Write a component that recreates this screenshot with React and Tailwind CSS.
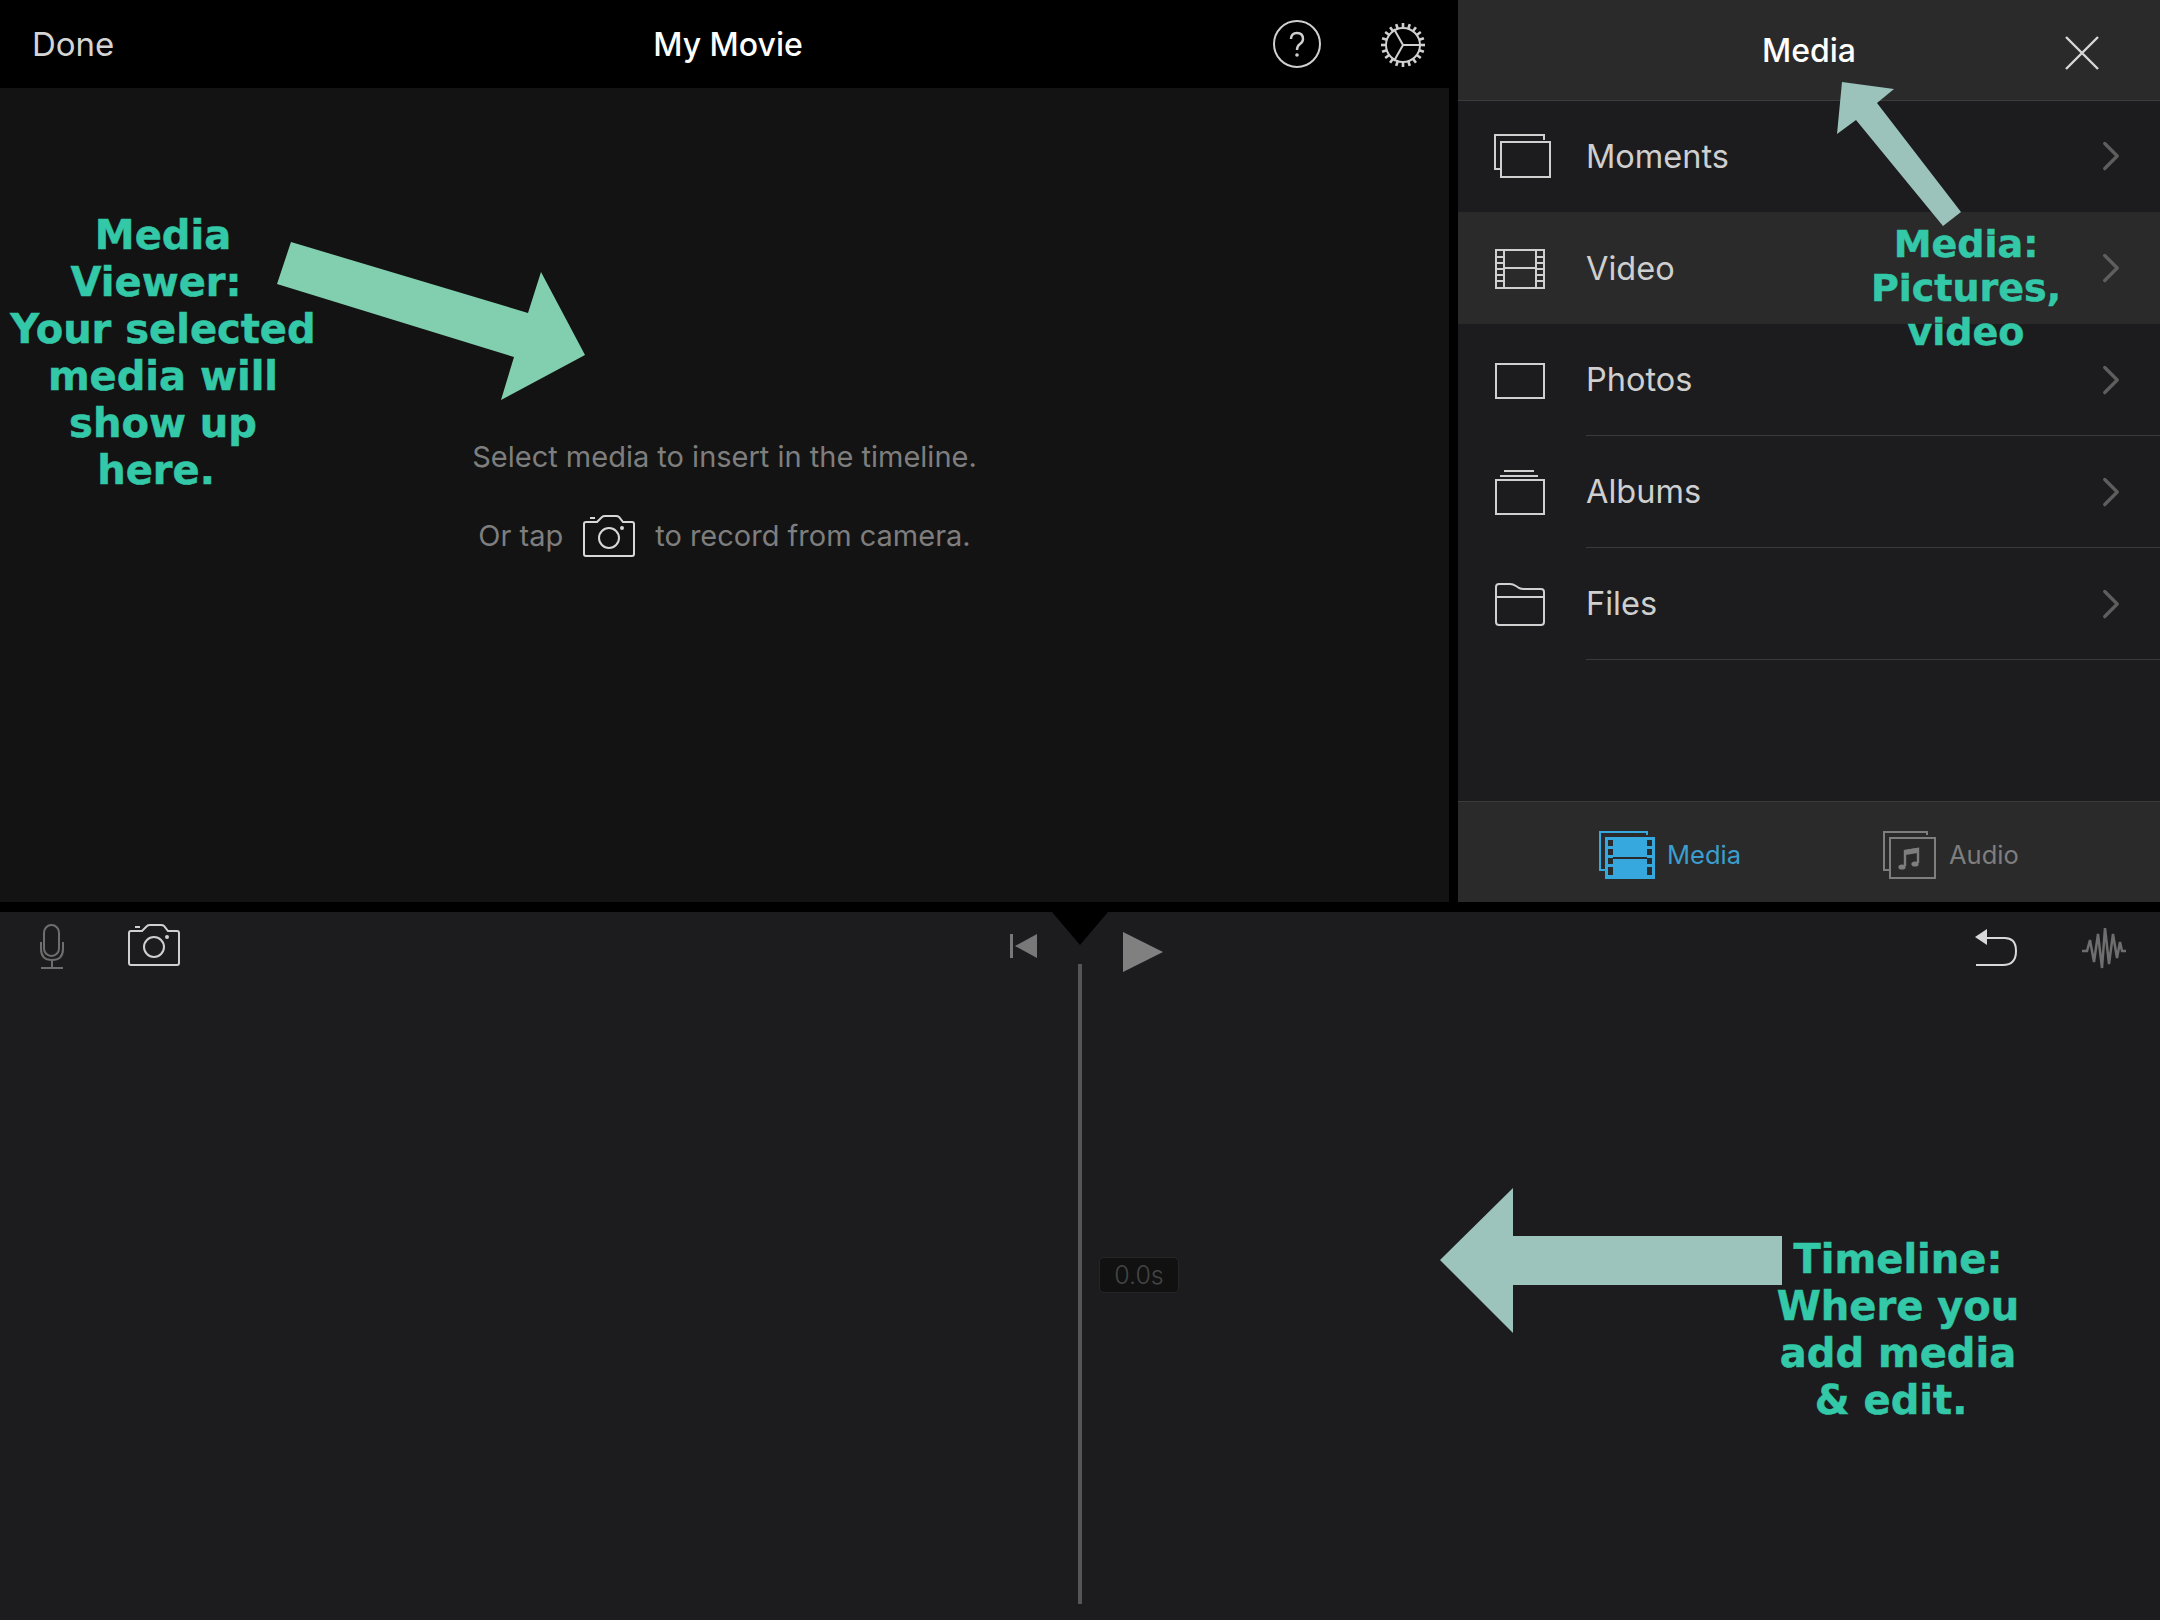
import React from "react";
import { ChevronRight } from "lucide-react";

const font = "font-['Inter','Roboto',sans-serif]";

// small line icons for the media list
const MomentsIcon = () => (
  <svg width="58" height="46" viewBox="0 0 58 46" fill="none" stroke="#d0d0d0" strokeWidth="2">
    <path d="M50 6V1H1v34h6" />
    <rect x="7" y="8" width="49" height="35" />
  </svg>
);
const VideoIcon = () => (
  <svg width="52" height="42" viewBox="0 0 52 42" fill="none" stroke="#d0d0d0" strokeWidth="2">
    <rect x="2" y="2" width="48" height="38" />
    <path d="M10 2v38M42 2v38M10 20h32M2 9h8M2 15h8M2 21h8M2 27h8M2 33h8M42 9h8M42 15h8M42 21h8M42 27h8M42 33h8" />
  </svg>
);
const PhotosIcon = () => (
  <svg width="52" height="38" viewBox="0 0 52 38" fill="none" stroke="#d0d0d0" strokeWidth="2">
    <rect x="2" y="2" width="48" height="34" />
  </svg>
);
const AlbumsIcon = () => (
  <svg width="52" height="46" viewBox="0 0 52 46" fill="none" stroke="#d0d0d0" strokeWidth="2">
    <path d="M10 1h30M6 6h38" />
    <rect x="2" y="10" width="48" height="34" />
  </svg>
);
const FilesIcon = () => (
  <svg width="52" height="44" viewBox="0 0 52 44" fill="none" stroke="#d0d0d0" strokeWidth="2" className="-mt-[3px]">
    <path d="M2 14V5q0-3 3-3h11q3 0 6 2l3 2q2 1 5 1h17q3 0 3 3v30q0 3-3 3H5q-3 0-3-3z" />
    <path d="M2 15h48" />
  </svg>
);

const CameraIcon = ({ color = "#d8d8d8" }) => (
  <svg width="52" height="42" viewBox="0 0 52 42" fill="none" stroke={color} strokeWidth="2">
    <path d="M3 7h11l5-5q1-1 3-1h11q2 0 3 1l4 5h9q2 0 2 2v30q0 2-2 2H3q-2 0-2-2V9q0-2 2-2z" />
    <circle cx="26" cy="23" r="10" />
    <circle cx="39" cy="13" r="1" fill={color} />
    <path d="M7 3h5" />
  </svg>
);

const GearIcon = () => {
  const teeth = [];
  for (let i = 0; i < 20; i++) {
    const a = (i * Math.PI) / 10;
    teeth.push(
      <line
        key={i}
        x1={23 + 17 * Math.cos(a)}
        y1={23 + 17 * Math.sin(a)}
        x2={23 + 22 * Math.cos(a)}
        y2={23 + 22 * Math.sin(a)}
        strokeWidth="2.6"
      />
    );
  }
  return (
    <svg width="46" height="46" viewBox="0 0 46 46" fill="none" stroke="#d0d0d0" strokeWidth="2">
      <circle cx="23" cy="23" r="17" />
      {teeth}
      <path d="M14 7l9 16h20M23 23l-9 16" />
    </svg>
  );
};

const rows = [
  { label: "Moments", icon: <MomentsIcon /> },
  { label: "Video", icon: <VideoIcon />, active: true },
  { label: "Photos", icon: <PhotosIcon /> },
  { label: "Albums", icon: <AlbumsIcon /> },
  { label: "Files", icon: <FilesIcon /> },
];

const Note = ({ className, children }) => (
  <div
    className={`absolute text-center font-['DejaVu_Sans',sans-serif] font-bold text-[#33c9a8] [-webkit-text-stroke:0.5px_#33c9a8] ${className}`}
  >
    {children}
  </div>
);

export default function App() {
  return (
    <div className={`relative w-[2160px] h-[1620px] overflow-hidden bg-black ${font}`}>
      <div className="flex h-[902px]">
        {/* Media viewer */}
        <div className="w-[1449px] flex flex-col">
          <div className="h-[88px] bg-black grid grid-cols-3 items-center px-8 pt-[1px]">
            <span className="text-[#d4d4d4] text-[33px]">Done</span>
            <span className="text-white text-[32px] font-medium text-center ml-[7px]">My Movie</span>
            <div className="flex justify-end items-center gap-[59px] -mr-[9px]">
              <svg width="48" height="48" viewBox="0 0 48 48" fill="none" stroke="#d0d0d0" strokeWidth="2" className="-mt-[1px]">
                <circle cx="24" cy="24" r="23" />
                <path d="M18 19q0-6 6-6t6 6q0 3-3 5t-3 6" strokeWidth="2.4" />
                <circle cx="24" cy="35" r="1.8" fill="#d0d0d0" stroke="none" />
              </svg>
              <GearIcon />
            </div>
          </div>
          <div className="flex-1 bg-[#131313] flex flex-col items-center pt-[348px] text-[#7e7e7e] text-[29px]">
            <p className="h-[42px] leading-[42px]">Select media to insert in the timeline.</p>
            <div className="flex items-center gap-[20px] mt-[36px] h-[44px]">
              <span>Or tap</span>
              <CameraIcon color="#d8d8d8" />
              <span>to record from camera.</span>
            </div>
          </div>
        </div>

        {/* Media browser */}
        <div className="w-[702px] ml-[9px] bg-[#1c1c1e] flex flex-col">
          <div className="h-[101px] -mb-[1px] bg-[#2a2a2a] border-b border-[#3c3c3c] flex items-center justify-center relative pt-[2px]">
            <span className="text-white text-[32px] font-medium">Media</span>
            <svg
              className="absolute right-[61px] top-[36px]"
              width="34"
              height="34"
              viewBox="0 0 34 34"
              fill="none"
              stroke="#d8d8d8"
              strokeWidth="2.4"
            >
              <path d="M1 1l32 32M33 1L1 33" />
            </svg>
          </div>
          <div className="flex-1">
            {rows.map((row) => (
              <div
                key={row.label}
                className={`h-[112px] flex items-center ${row.active ? "bg-[#2a2a2a]" : ""}`}
              >
                <div className="w-[128px] pl-[36px] pt-[2px] flex items-center">{row.icon}</div>
                <div
                  className={`flex-1 h-full flex items-center justify-between pr-[24px] ${
                    row.label === "Moments" || row.label === "Video" ? "" : "border-b border-[#3a3a3c]"
                  }`}
                >
                  <span className="text-[#cfcfcf] text-[32.5px] pt-[2px]">{row.label}</span>
                  <ChevronRight className="text-[#5e5e5e]" size={50} strokeWidth={1.6} />
                </div>
              </div>
            ))}
          </div>
          <div className="h-[101px] bg-[#2a2a2a] border-t border-[#3c3c3c] flex items-center pl-[141px] pt-[5px] gap-[142px]">
            <div className="flex items-center gap-[12px]">
              <svg width="56" height="48" viewBox="0 0 56 48" fill="none">
                <path d="M48 4V1H1v38h5" stroke="#36a8dd" strokeWidth="2" />
                <rect x="6" y="6" width="50" height="42" fill="#36a8dd" />
                <g fill="#2a2a2a">
                  <rect x="9" y="9" width="5" height="6" />
                  <rect x="9" y="18" width="5" height="6" />
                  <rect x="9" y="27" width="5" height="6" />
                  <rect x="9" y="36" width="5" height="8" />
                  <rect x="48" y="9" width="5" height="6" />
                  <rect x="48" y="18" width="5" height="6" />
                  <rect x="48" y="27" width="5" height="6" />
                  <rect x="48" y="36" width="5" height="8" />
                  <rect x="14" y="26" width="34" height="2" />
                </g>
              </svg>
              <span className="text-[#3a9fcf] text-[25.5px] mt-[1px]">Media</span>
            </div>
            <div className="flex items-center gap-[12px]">
              <svg width="54" height="48" viewBox="0 0 54 48" fill="none" stroke="#7e7e7e" strokeWidth="2">
                <path d="M44 4V1H1v38h5" />
                <rect x="7" y="7" width="45" height="40" />
                <path d="M22 35V20l13-2v14" strokeWidth="2.4" />
                <path d="M22 20l13-2v3l-13 2z" fill="#7e7e7e" />
                <ellipse cx="19" cy="36" rx="3.6" ry="2.6" fill="#7e7e7e" stroke="none" />
                <ellipse cx="32" cy="33" rx="3.6" ry="2.6" fill="#7e7e7e" stroke="none" />
              </svg>
              <span className="text-[#7e7e7e] text-[25.5px] mt-[1px]">Audio</span>
            </div>
          </div>
        </div>
      </div>

      {/* Timeline */}
      <div className="mt-[10px] h-[708px] bg-[#1c1c1e] relative">
        <div className="flex items-start justify-between pl-[38px] pr-[34px] pt-[12px]">
          <div className="flex items-start gap-[60px]">
            <svg width="28" height="46" viewBox="0 0 28 46" fill="none" stroke="#6e6e6e" strokeWidth="2">
              <rect x="6" y="1" width="15" height="31" rx="7.5" />
              <path d="M3 18v7q0 11 11 11t11-11v-7M14 36v8M3 44h22" />
            </svg>
            <div className="ml-[2px]">
              <CameraIcon color="#d0d0d0" />
            </div>
          </div>
          <div className="flex items-start gap-[45px] mt-[9px] ml-[19px]">
            <svg width="28" height="26" viewBox="0 0 28 26" fill="#787878">
              <rect x="0" y="1" width="3" height="24" />
              <path d="M5 13L27 1v24z" />
            </svg>
            <svg width="40" height="40" viewBox="0 0 40 40" fill="#808080" className="mt-[-1px] ml-[40px]">
              <path d="M0 0L40 20L0 40z" />
            </svg>
          </div>
          <div className="flex items-start gap-[64px] pt-[4px]">
            <svg width="44" height="40" viewBox="0 0 44 40" fill="none" stroke="#d8d8d8" strokeWidth="2">
              <path d="M2 37h27q13 0 13-14T29 10H12" />
              <path d="M1 9L13 1v16z" fill="#d8d8d8" stroke="none" />
            </svg>
            <svg width="44" height="42" viewBox="0 0 44 42" fill="none" stroke="#6e6e6e" strokeWidth="2.5">
              <path d="M0 23h5l3-11 4 22 4-28 4 34 3-40 4 36 4-30 4 24 3-16 2 9h5" />
            </svg>
          </div>
        </div>
        {/* Playhead */}
        <div className="absolute left-[1052px] top-0 w-0 h-0 border-l-[28px] border-r-[28px] border-t-[33px] border-l-transparent border-r-transparent border-t-black" />
        <div className="absolute left-[1078px] top-[52px] bottom-[16px] w-[4px] bg-[#555555]" />
        <div className="absolute left-[1099px] top-[345px] w-[80px] h-[36px] rounded-[5px] bg-[#111111] border border-[#262626] text-[#444444] text-[25px] font-light leading-[34px] text-center">
          0.0s
        </div>
      </div>

      {/* Annotations */}
      <svg className="absolute left-0 top-0 pointer-events-none" width="2160" height="1620" viewBox="0 0 2160 1620">
        <path d="M291 242L277 284L514 357L501 400L585 355L541 272L528 313Z" fill="#82cfb0" />
        <path d="M1842 82L1894 89L1877 103L1961 212L1943 226L1856 120L1837 134Z" fill="#9bc3bc" />
        <path d="M1440 1260L1513 1188V1236H1782V1285H1513V1333Z" fill="#9cc3bc" />
      </svg>
      <Note className="left-0 top-[212px] w-[326px] text-[40px] leading-[47px]">
        Media
        <br />
        Viewer:&nbsp;
        <br />
        Your selected
        <br />
        media will
        <br />
        show up
        <br />
        here.&nbsp;
      </Note>
      <Note className="left-[1860px] top-[222px] w-[212px] text-[38px] leading-[44px]">
        Media:
        <br />
        Pictures,
        <br />
        video
      </Note>
      <Note className="left-[1770px] top-[1236px] w-[256px] text-[40px] leading-[47px]">
        Timeline:
        <br />
        Where you
        <br />
        add media
        <br />
        &amp; edit.&nbsp;
      </Note>
    </div>
  );
}
